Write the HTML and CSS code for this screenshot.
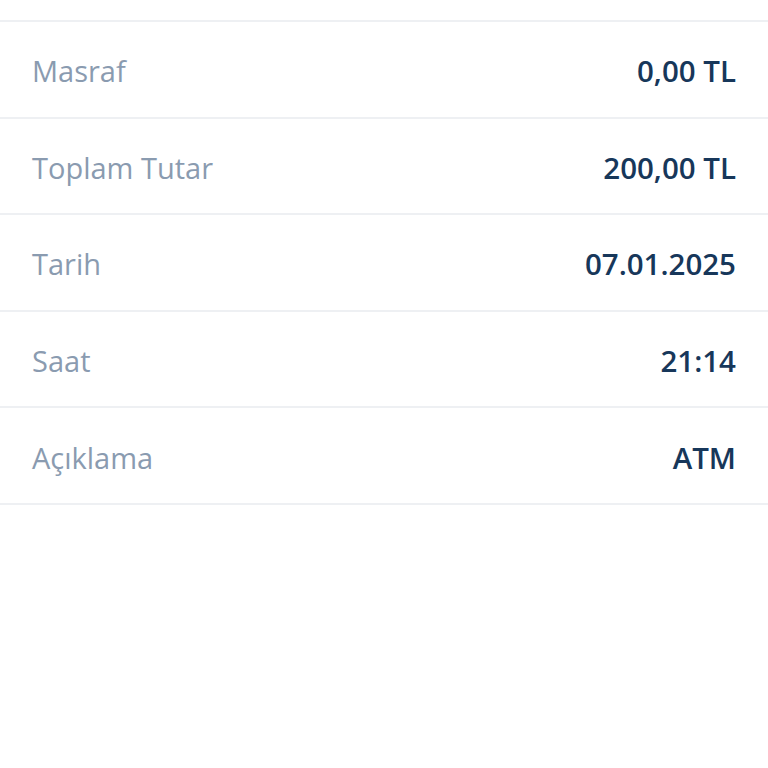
FILE: index.html
```html
<!DOCTYPE html>
<html lang="tr">
<head>
<meta charset="utf-8">
<link rel="stylesheet" href="styles.css">
</head>
<body>
<div class="top"></div>
<div class="list">
  <div class="row"><span class="label">Masraf</span><span class="value">0,00 TL</span></div>
  <div class="row"><span class="label">Toplam Tutar</span><span class="value">200,00 TL</span></div>
  <div class="row"><span class="label">Tarih</span><span class="value">07.01.2025</span></div>
  <div class="row"><span class="label">Saat</span><span class="value">21:14</span></div>
  <div class="row"><span class="label">Açıklama</span><span class="value">ATM</span></div>
</div>
</body>
</html>
```
FILE: styles.css
```css
html, body {
  margin: 0;
  padding: 0;
  background: #ffffff;
  font-family: "Open Sans", "Noto Sans", sans-serif;
}
.top {
  height: 20px;
}
.list {
  border-bottom: 2px solid #eef0f3;
}
.row {
  display: flex;
  justify-content: space-between;
  align-items: center;
  box-sizing: border-box;
  height: 96.6px;
  padding: 3px 32px 0;
  border-top: 2px solid #eef0f3;
}
.label {
  font-size: 29px;
  color: #8a9bb0;
  font-weight: 400;
}
.value {
  font-size: 29.5px;
  color: #17375a;
  font-weight: 600;
}
```
